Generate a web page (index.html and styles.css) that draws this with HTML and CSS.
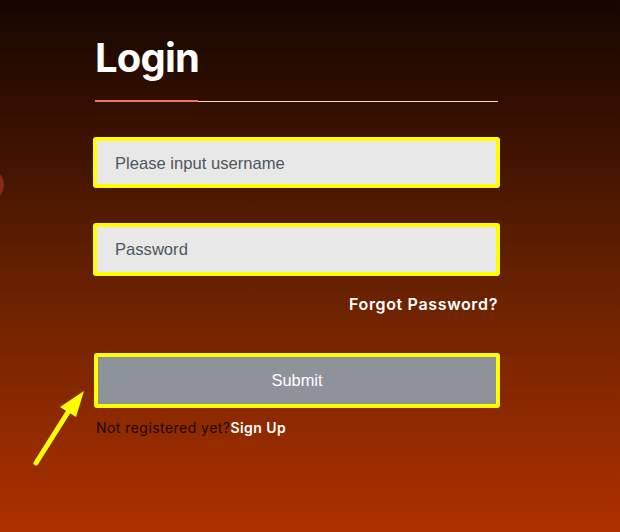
FILE: index.html
```html
<!DOCTYPE html>
<html lang="en">
<head>
  <meta charset="UTF-8" />
  <meta name="viewport" content="width=device-width, initial-scale=1.0"/>
  <title>Login</title>
  <link rel="stylesheet" href="styles.css">
</head>
<body>
  <span class="blob"></span>
  <svg class="arrow" width="100" height="90" viewBox="0 0 100 90">
    <line x1="36" y1="82" x2="70" y2="28" stroke="#ffff00" stroke-width="5" stroke-linecap="round" />
    <polygon points="84,10 60,26 76,36" fill="#ffff00" />
  </svg>

  <div class="login">
    <h1 class="title">Login</h1>
    <div class="divider"></div>
    <form class="login-form">
      <input type="text" class="field" placeholder="Please input username" />
      <input type="password" class="field field-pass" placeholder="Password" />
      <div class="forgot-row">
        <a href="#" class="forgot">Forgot Password?</a>
      </div>
      <button type="button" class="submit">Submit</button>
      <p class="signup">Not registered yet?<a href="#">Sign Up</a></p>
    </form>
  </div>
</body>
</html>
```

FILE: styles.css
```css
* {
  margin: 0;
  padding: 0;
  box-sizing: border-box;
}

body {
  font-family: Inter, 'Noto Sans', sans-serif;
  background: linear-gradient(to bottom, #150600 0%, #3a1100 25%, #6a2200 55%, #ae3000 100%);
  color: #fff;
  height: 100vh;
  overflow: hidden;
  position: relative;
}

.blob {
  position: absolute;
  left: -16px;
  top: 172px;
  width: 20px;
  height: 26px;
  border-radius: 50%;
  background: #8a2a14;
}

.arrow {
  position: absolute;
  left: 0;
  top: 381px;
}

.login {
  width: 407px;
  margin-left: 93px;
  padding-top: 34px;
}

.title {
  font-size: 40px;
  line-height: 48px;
  font-weight: 700;
  letter-spacing: -0.8px;
  margin-left: 2px;
}

.divider {
  position: relative;
  height: 1px;
  background: #f4d9cc;
  margin: 19px 2px 0 2px;
}

.divider::before {
  content: "";
  position: absolute;
  left: 0;
  top: -1px;
  width: 103px;
  height: 2px;
  background: #e57860;
}

.login-form {
  display: flex;
  flex-direction: column;
  padding-top: 35px;
}

.field {
  width: 407px;
  height: 51px;
  border: 4px solid #ffff00;
  border-radius: 3px;
  background: #e8e8e8;
  padding: 2px 0 0 18px;
  font-family: 'Liberation Sans', Arial, sans-serif;
  font-size: 16.6px;
  color: #333;
  outline: none;
}

.field::placeholder {
  color: #4f565d;
}

.field-pass {
  margin-top: 35px;
  height: 53px;
  padding-top: 0;
}

.forgot-row {
  display: flex;
  justify-content: flex-end;
  padding: 16px 2px 0 0;
}

.forgot {
  color: #fff;
  text-decoration: none;
  font-size: 16px;
  font-weight: 600;
  line-height: 24px;
  letter-spacing: 0.65px;
}

.submit {
  margin-top: 37px;
  margin-left: 1px;
  width: 406px;
  height: 55px;
  border: 4px solid #ffff00;
  border-radius: 3px;
  background: #8e9299;
  color: #fff;
  font-family: 'Liberation Sans', Arial, sans-serif;
  font-size: 16.4px;
}

.signup {
  margin: 10px 0 0 3px;
  font-size: 14px;
  line-height: 20px;
  color: #1c0800;
  letter-spacing: 0.45px;
}

.signup a {
  color: #fff;
  text-decoration: none;
  font-weight: 600;
}
```
